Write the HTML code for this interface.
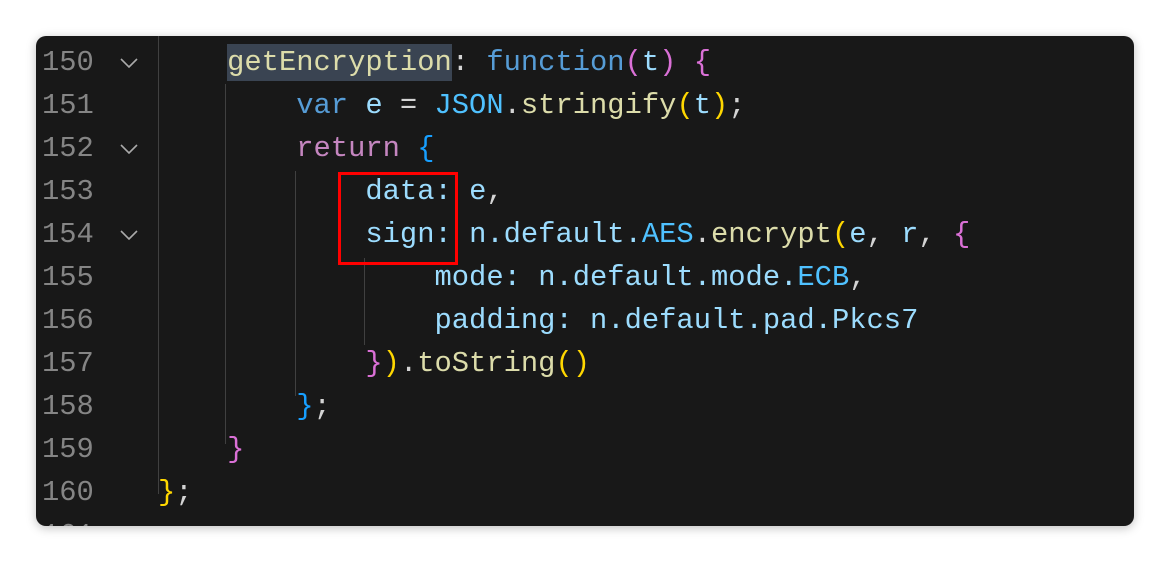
<!DOCTYPE html>
<html><head><meta charset="utf-8"><style>
body{margin:0;width:1170px;height:562px;background:#fff;position:relative;overflow:hidden}
.panel{position:absolute;left:36px;top:36px;width:1098px;height:490px;background:#181818;border-radius:10px;box-shadow:0 2px 10px rgba(0,0,0,.25);overflow:hidden}
.l{position:absolute;left:0;height:43px;line-height:43px;font-family:"Liberation Mono",monospace;font-size:28.8px;white-space:pre;color:#d4d4d4}
.n{position:absolute;left:6px;color:#858585;font-family:"Liberation Mono",monospace;font-size:28.8px;line-height:43px}
.c{position:absolute;left:122px}
.chev{position:absolute;left:84px;width:18px;height:10px}
.g{position:absolute;width:1px;background:#404040}
.y{color:#dcdcaa}.b{color:#569cd6}.p{color:#c586c0}.v{color:#9cdcfe}.k{color:#4fc1ff}
.gd{color:#ffd700}.pk{color:#da70d6}.bl{color:#179fff}
.hl{background:#3a4452;padding:2px 0}
</style></head><body>
<div class="panel">
<div class="g" style="left:122px;top:0;height:458px"></div>
<div class="g" style="left:189px;top:48px;height:360px"></div>
<div class="g" style="left:259px;top:135px;height:225px"></div>
<div class="g" style="left:328px;top:222px;height:87px"></div>

<div class="l" style="top:5px"><span class="n">150</span><svg class="chev" style="top:17px" viewBox="0 0 18 10"><path d="M1 1l8 8 8-8" stroke="#aaa" stroke-width="1.6" fill="none"/></svg><span class="c">    <span class="y hl">getEncryption</span>: <span class="b">function</span><span class="pk">(</span><span class="v">t</span><span class="pk">)</span> <span class="pk">{</span></span></div>
<div class="l" style="top:48px"><span class="n">151</span><span class="c">        <span class="b">var</span> <span class="v">e</span> = <span class="k">JSON</span>.<span class="y">stringify</span><span class="gd">(</span><span class="v">t</span><span class="gd">)</span>;</span></div>
<div class="l" style="top:91px"><span class="n">152</span><svg class="chev" style="top:17px" viewBox="0 0 18 10"><path d="M1 1l8 8 8-8" stroke="#aaa" stroke-width="1.6" fill="none"/></svg><span class="c">        <span class="p">return</span> <span class="bl">{</span></span></div>
<div class="l" style="top:134px"><span class="n">153</span><span class="c">            <span class="v">data:</span> <span class="v">e</span>,</span></div>
<div class="l" style="top:177px"><span class="n">154</span><svg class="chev" style="top:17px" viewBox="0 0 18 10"><path d="M1 1l8 8 8-8" stroke="#aaa" stroke-width="1.6" fill="none"/></svg><span class="c">            <span class="v">sign:</span> <span class="v">n.default.</span><span class="k">AES</span>.<span class="y">encrypt</span><span class="gd">(</span><span class="v">e</span>, <span class="v">r</span>, <span class="pk">{</span></span></div>
<div class="l" style="top:220px"><span class="n">155</span><span class="c">                <span class="v">mode:</span> <span class="v">n.default.mode.</span><span class="k">ECB</span>,</span></div>
<div class="l" style="top:263px"><span class="n">156</span><span class="c">                <span class="v">padding:</span> <span class="v">n.default.pad.Pkcs7</span></span></div>
<div class="l" style="top:306px"><span class="n">157</span><span class="c">            <span class="pk">}</span><span class="gd">)</span>.<span class="y">toString</span><span class="gd">()</span></span></div>
<div class="l" style="top:349px"><span class="n">158</span><span class="c">        <span class="bl">}</span>;</span></div>
<div class="l" style="top:392px"><span class="n">159</span><span class="c">    <span class="pk">}</span></span></div>
<div class="l" style="top:435px"><span class="n">160</span><span class="c"><span class="gd">}</span>;</span></div>
<div class="l" style="top:478px"><span class="n">161</span></div>
<div style="position:absolute;left:302px;top:136px;width:114px;height:87px;border:3px solid #f00"></div>
</div>
</body></html>
